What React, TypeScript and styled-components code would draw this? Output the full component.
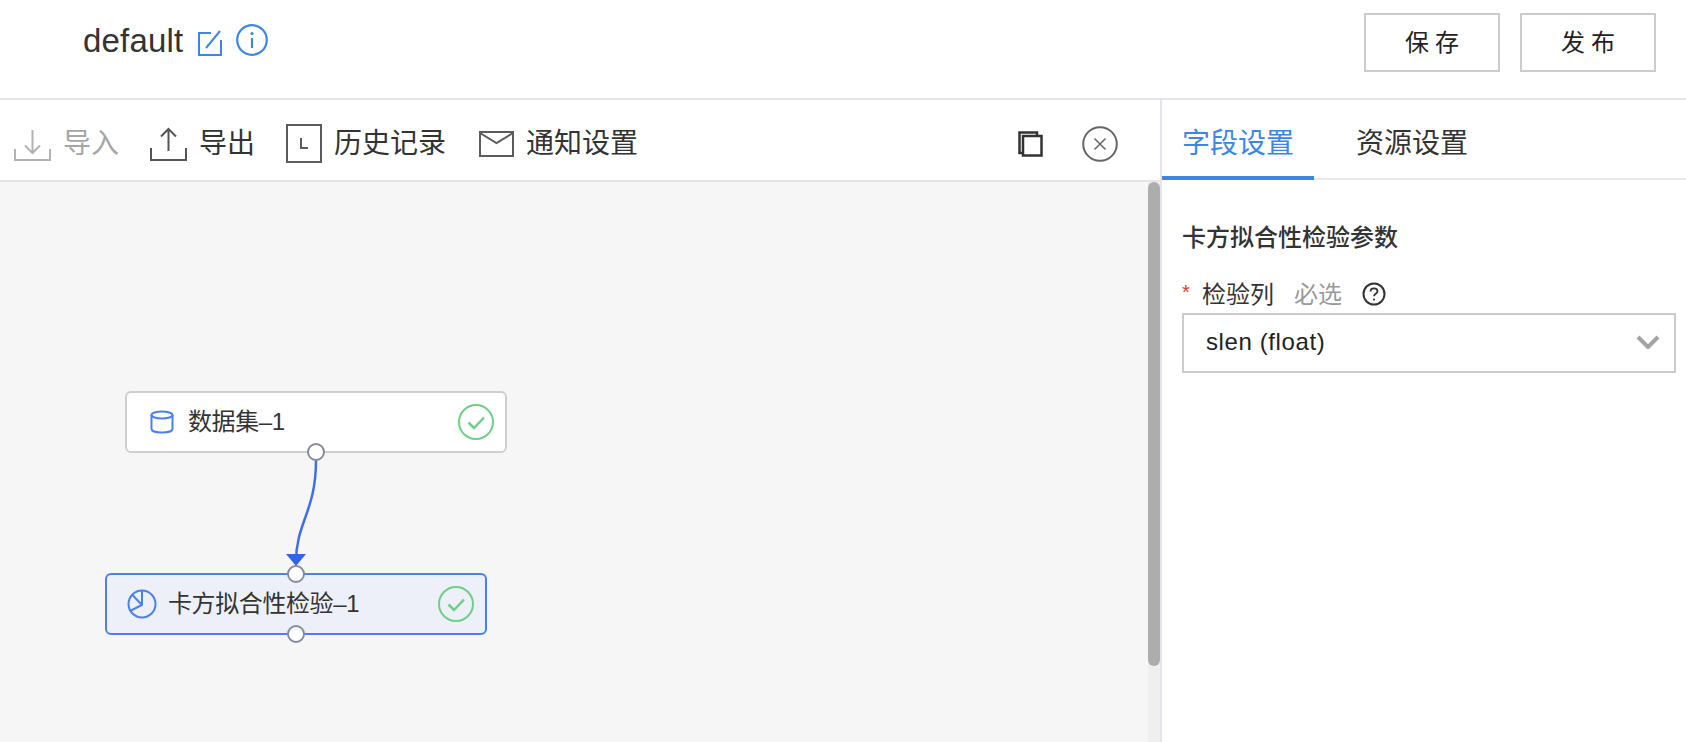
import * as React from 'react'
import styled, { createGlobalStyle } from 'styled-components'

const sans = `"Liberation Sans", "Noto Sans CJK SC", sans-serif`

const GlobalStyle = createGlobalStyle`
  html, body {
    margin: 0;
    padding: 0;
    height: 100%;
    overflow: hidden;
    background: #fff;
    font-family: ${sans};
  }
`

const Page = styled.div`
  width: 1686px;
  height: 742px;
  display: flex;
  flex-direction: column;
  color: #333;
`

const Header = styled.header`
  flex: none;
  height: 100px;
  box-sizing: border-box;
  border-bottom: 2px solid #e3e5ea;
  display: flex;
  align-items: flex-start;
  justify-content: space-between;
  padding: 13px 30px 0 83px;
`

const TitleRow = styled.div`
  display: flex;
  align-items: center;
  height: 56px;
`

const Title = styled.span`
  font-size: 33px;
  letter-spacing: 0.2px;
  color: #333;
  margin-right: 15px;
`

const Actions = styled.div`
  display: flex;
  gap: 20px;
`

const ActionButton = styled.button`
  width: 136px;
  height: 59px;
  box-sizing: border-box;
  background: #fff;
  border: 2px solid #ccc;
  font-family: ${sans};
  font-size: 24px;
  letter-spacing: 6px;
  color: #222;
  padding: 0 0 5px 6px;
`

const Body = styled.div`
  flex: 1;
  display: flex;
  min-height: 0;
`

const Workspace = styled.section`
  width: 1162px;
  box-sizing: border-box;
  flex: none;
  display: flex;
  flex-direction: column;
  border-right: 2px solid #e3e5ea;
`

const Toolbar = styled.div`
  flex: none;
  height: 82px;
  box-sizing: border-box;
  border-bottom: 2px solid #e3e5ea;
  display: flex;
  align-items: center;
  padding: 7px 42px 0 14px;
`

const ToolItem = styled.div<{ $disabled?: boolean; $spacing?: number }>`
  display: flex;
  align-items: center;
  gap: 12px;
  margin-right: ${(p) => p.$spacing ?? 31}px;
  font-size: 28px;
  color: ${(p) => (p.$disabled ? '#a6a6a6' : '#333')};
`

const ToolText = styled.span`
  padding-bottom: 5px;
`

const ToolEnd = styled.div`
  margin-left: auto;
  display: flex;
  align-items: center;
  gap: 39px;
`

const Canvas = styled.div`
  position: relative;
  flex: 1;
  background: #f6f6f7;
  overflow: hidden;
`

const ScrollTrack = styled.div`
  position: absolute;
  top: 0;
  right: 0;
  bottom: 0;
  width: 12px;
  background: #efefef;
`

const ScrollThumb = styled.div`
  width: 12px;
  height: 484px;
  border-radius: 6px;
  background: #adadad;
`

const Links = styled.svg`
  position: absolute;
  left: 0;
  top: 0;
`

const Node = styled.div<{ $x: number; $y: number; $active?: boolean }>`
  position: absolute;
  left: ${(p) => p.$x}px;
  top: ${(p) => p.$y}px;
  width: 382px;
  height: 62px;
  box-sizing: border-box;
  border: 2px solid ${(p) => (p.$active ? '#4a7fee' : '#cfcfcf')};
  border-radius: 6px;
  background: ${(p) => (p.$active ? '#edf0f8' : '#fff')};
  display: flex;
  align-items: center;
  padding: 0 11px 0 ${(p) => (p.$active ? 20 : 23)}px;
  gap: ${(p) => (p.$active ? 11 : 14)}px;
`

const NodeLabel = styled.span`
  flex: 1;
  font-size: 24px;
  letter-spacing: -0.4px;
  color: #333;
  position: relative;
  top: -3px;
`

const Port = styled.span<{ $side: 'top' | 'bottom' }>`
  position: absolute;
  left: 50%;
  ${(p) => p.$side}: -10px;
  width: 18px;
  height: 18px;
  margin-left: -9px;
  box-sizing: border-box;
  border: 2px solid #858b98;
  border-radius: 50%;
  background: #fff;
`

const Side = styled.aside`
  flex: 1;
  display: flex;
  flex-direction: column;
  min-width: 0;
`

const Tabs = styled.div`
  flex: none;
  height: 80px;
  box-sizing: border-box;
  border-bottom: 2px solid #e8e9ec;
  display: flex;
  gap: 22px;
`

const Tab = styled.div<{ $active?: boolean }>`
  height: 80px;
  box-sizing: border-box;
  padding: 5px 20px 0;
  display: flex;
  align-items: center;
  font-size: 28px;
  color: ${(p) => (p.$active ? '#3d86e6' : '#333')};
  border-bottom: 4px solid ${(p) => (p.$active ? '#3d86e6' : 'transparent')};
`

const Form = styled.div`
  padding: 42px 10px 0 20px;
`

const SectionTitle = styled.h3`
  margin: 0;
  font-size: 24px;
  line-height: 32px;
  font-weight: 500;
  color: #333;
`

const FieldLabel = styled.div`
  display: flex;
  align-items: center;
  height: 34px;
  margin-top: 21px;
  font-size: 24px;
  color: #333;
`

const Star = styled.span`
  color: #e03a30;
  font-size: 20px;
  width: 20px;
`

const Hint = styled.span`
  color: #999;
  margin: 0 20px;
`

const Select = styled.div`
  height: 60px;
  margin-top: 4px;
  box-sizing: border-box;
  border: 2px solid #ccc;
  display: flex;
  align-items: center;
  justify-content: space-between;
  padding: 0 14px 2px 22px;
  font-size: 24px;
  letter-spacing: 0.6px;
  color: #222;
`

const EditIcon = () => (
  <svg width="24" height="26" viewBox="0 0 24 26" fill="none" stroke="#3d86e6" strokeWidth="2" style={{ marginTop: 4 }}>
    <path d="M13 3H1v22h22V10" />
    <path d="M8 18L22 1" />
  </svg>
)

const InfoIcon = () => (
  <svg width="32" height="32" viewBox="0 0 32 32" fill="none" style={{ marginLeft: 14, marginTop: -3 }}>
    <circle cx="16" cy="16" r="14.800" stroke="#3d86e6" strokeWidth="2.200" />
    <circle cx="16" cy="9.500" r="1.600" fill="#3d86e6" />
    <path d="M16 14v10" stroke="#3d86e6" strokeWidth="2.200" />
  </svg>
)

const ImportIcon = () => (
  <svg width="37" height="34" viewBox="0 0 37 34" fill="none" stroke="#b2b2b2" strokeWidth="2">
    <path d="M1 22v11h35V22" />
    <path d="M18.500 3v23M11 18.500l7.500 7.500L26 18.500" />
  </svg>
)

const ExportIcon = () => (
  <svg width="37" height="34" viewBox="0 0 37 34" fill="none" stroke="#555" strokeWidth="2">
    <path d="M1 21v12h35V21" />
    <path d="M18.500 24V2M11 9.500L18.500 2L26 9.500" />
  </svg>
)

const HistoryIcon = () => (
  <svg width="36" height="39" viewBox="0 0 36 39" fill="none" stroke="#5c5c5c">
    <rect x="1" y="1" width="34" height="37" strokeWidth="2" />
    <path d="M15 14v10h7" strokeWidth="2" />
  </svg>
)

const MailIcon = () => (
  <svg width="35" height="26" viewBox="0 0 35 26" fill="none" stroke="#5c5c5c" strokeWidth="2">
    <rect x="1" y="1" width="33" height="24" />
    <path d="M1 2l16.500 10L34 2" />
  </svg>
)

const CopyIcon = () => (
  <svg width="25" height="26" viewBox="0 0 25 26" fill="none" stroke="#333" strokeWidth="2.500">
    <path d="M4 22H1.500V1.500H19V5" />
    <rect x="5" y="5" width="18.500" height="19.500" />
  </svg>
)

const CloseIcon = () => (
  <svg width="36" height="36" viewBox="0 0 36 36" fill="none" stroke="#666" strokeWidth="2">
    <circle cx="18" cy="18" r="16.800" />
    <path d="M12.500 12.500l11 11M23.500 12.500l-11 11" strokeWidth="1.500" />
  </svg>
)

const DatabaseIcon = () => (
  <svg width="24" height="24" viewBox="0 0 24 24" fill="none" stroke="#4a7fee" strokeWidth="2">
    <ellipse cx="12" cy="5" rx="10.500" ry="3.500" />
    <path d="M1.500 5v14c0 2 4.700 3.500 10.500 3.500s10.500-1.500 10.500-3.500V5" />
  </svg>
)

const PieIcon = () => (
  <svg width="30" height="30" viewBox="0 0 30 30" fill="none" stroke="#4a7fee" strokeWidth="2">
    <circle cx="15" cy="15" r="13.500" />
    <path d="M15 1.500V16L3 22M15 16L5.500 6" />
  </svg>
)

const CheckBadge = () => (
  <svg width="36" height="36" viewBox="0 0 36 36" fill="none" stroke="#6fcf86">
    <circle cx="18" cy="18" r="17" strokeWidth="2" />
    <path d="M10.500 18.500l5.500 5.500 10-10.500" strokeWidth="2.500" />
  </svg>
)

const HelpIcon = () => (
  <svg width="24" height="24" viewBox="0 0 24 24" fill="none" stroke="#333" strokeWidth="2" style={{ marginTop: 3 }}>
    <circle cx="12" cy="12" r="10.500" />
    <path d="M8.500 9.500c0-2 1.500-3.200 3.500-3.200s3.500 1.200 3.500 3c0 2.500-3.500 2.500-3.500 5" strokeWidth="1.800" />
    <circle cx="12" cy="17.500" r="1.100" fill="#333" stroke="none" />
  </svg>
)

const Chevron = () => (
  <svg width="24" height="14" viewBox="0 0 24 14" fill="none" stroke="#a3a3a3" strokeWidth="4">
    <path d="M2 2l10 10L22 2" />
  </svg>
)

export default function App() {
  return (
    <Page>
      <GlobalStyle />
      <Header>
        <TitleRow>
          <Title>default</Title>
          <EditIcon />
          <InfoIcon />
        </TitleRow>
        <Actions>
          <ActionButton>保存</ActionButton>
          <ActionButton>发布</ActionButton>
        </Actions>
      </Header>
      <Body>
        <Workspace>
          <Toolbar>
            <ToolItem $disabled>
              <ImportIcon />
              <ToolText>导入</ToolText>
            </ToolItem>
            <ToolItem>
              <ExportIcon />
              <ToolText>导出</ToolText>
            </ToolItem>
            <ToolItem $spacing={33}>
              <HistoryIcon />
              <ToolText>历史记录</ToolText>
            </ToolItem>
            <ToolItem>
              <MailIcon />
              <ToolText>通知设置</ToolText>
            </ToolItem>
            <ToolEnd>
              <CopyIcon />
              <CloseIcon />
            </ToolEnd>
          </Toolbar>
          <Canvas>
            <Links width="1160" height="560" fill="none">
              <path d="M316 278C316 330 296 340 296 380" stroke="#3f6fe8" strokeWidth="2.500" />
              <path d="M286 372h20l-10 12z" fill="#2f66e6" />
            </Links>
            <Node $x={125} $y={209}>
              <DatabaseIcon />
              <NodeLabel>数据集–1</NodeLabel>
              <CheckBadge />
              <Port $side="bottom" />
            </Node>
            <Node $x={105} $y={391} $active>
              <PieIcon />
              <NodeLabel>卡方拟合性检验–1</NodeLabel>
              <CheckBadge />
              <Port $side="top" />
              <Port $side="bottom" />
            </Node>
            <ScrollTrack>
              <ScrollThumb />
            </ScrollTrack>
          </Canvas>
        </Workspace>
        <Side>
          <Tabs>
            <Tab $active>字段设置</Tab>
            <Tab>资源设置</Tab>
          </Tabs>
          <Form>
            <SectionTitle>卡方拟合性检验参数</SectionTitle>
            <FieldLabel>
              <Star>*</Star>
              检验列
              <Hint>必选</Hint>
              <HelpIcon />
            </FieldLabel>
            <Select>
              slen (float)
              <Chevron />
            </Select>
          </Form>
        </Side>
      </Body>
    </Page>
  )
}
